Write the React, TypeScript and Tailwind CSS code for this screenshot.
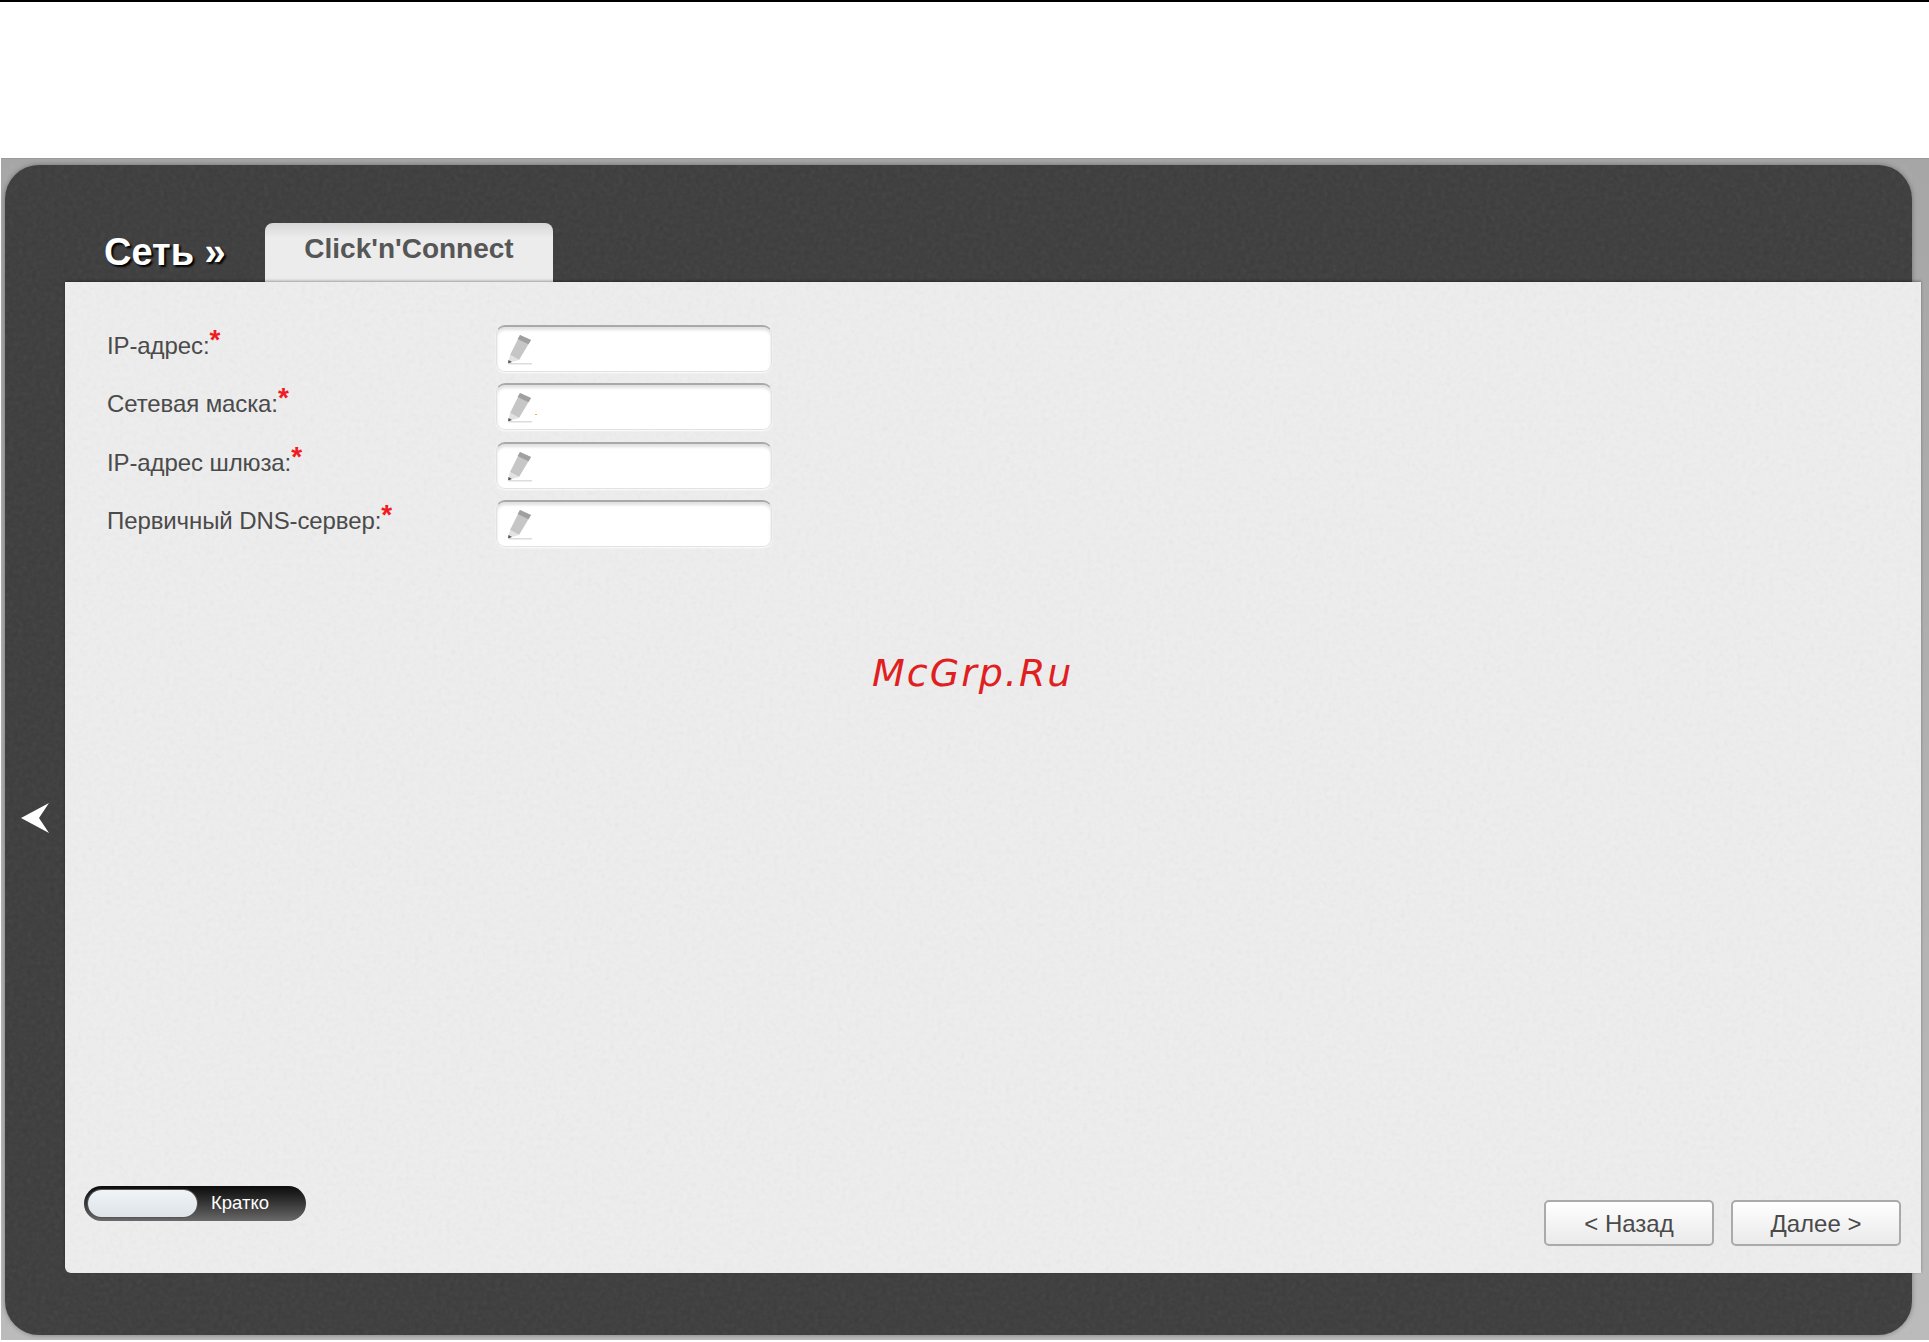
const fields = ['IP-адрес:', 'Сетевая маска:', 'IP-адрес шлюза:', 'Первичный DNS-сервер:'];

const Pencil = () => (
    <svg width="26" height="32" viewBox="0 0 26 32" className="shrink-0 ml-[10px] mt-[7px]">
        <path d="M13 1 L24 6 L12 26 L3 21 Z" fill="#c6c6c6" />
        <path d="M13 1 L24 6 L21.5 10.2 L10.6 5 Z" fill="#a0a0a0" />
        <path d="M3 21 L12 26 L1 29 Z" fill="#e2e2e2" />
        <path d="M1.5 26 L5 28 L1 29.5 Z" fill="#555555" />
        <rect x="2" y="29" width="23" height="1.5" fill="#dcdcdc" />
    </svg>
);

const Noise = ({ className }: { className: string }) => (
    <svg className={"absolute inset-0 w-full h-full pointer-events-none " + className}>
        <filter id="grain">
            <feTurbulence type="fractalNoise" baseFrequency="0.22" numOctaves="3" seed="4" />
            <feColorMatrix type="saturate" values="0" />
        </filter>
        <rect width="100%" height="100%" filter="url(#grain)" />
    </svg>
);

const Field = ({ label, speck }: { label: string; speck?: boolean }) => (
    <div className="flex items-start h-[47px]">
        <label className="w-[389px] pt-[4px] text-[24px] leading-[34px] tracking-[-0.1px] text-[#4a4a4a]">
            {label}
            <span className="relative -top-[5px] text-[28px] font-bold leading-none text-[#f01c24]">*</span>
        </label>
        <div className="flex items-start w-[276px] h-[47px] rounded-[9px] bg-white border border-[#e2e2e2] border-t-2 border-t-[#a9a9a9] shadow-[inset_0_3px_3px_rgba(0,0,0,0.12),0_1px_2px_rgba(255,255,255,0.9)]">
            <Pencil />
            {speck && <span className="mt-[29px] ml-[2px] w-[2px] h-[1px] bg-[#f0b060]" />}
            <input type="text" className="flex-1 min-w-0 h-full outline-none bg-transparent" />
        </div>
    </div>
);

const NavButton = ({ text }: { text: string }) => (
    <button className="w-[170px] h-[46px] pt-[2px] rounded-[5px] border-2 border-[#aaaaaa] bg-gradient-to-b from-white to-[#eaeaea] text-[24px] leading-none text-[#4a4a4a]">
        {text}
    </button>
);

const App = () => {
    return (
        <div className="h-[1342px] flex flex-col bg-white font-['Liberation_Sans',Arial,sans-serif] overflow-hidden">
            <div className="h-[2px] bg-black" />
            <div className="mt-[156px] ml-[1px] h-[1182px] pt-[6px] pl-[4px] pr-[17px] pb-[5px] border-t border-[#9a9a9a] bg-gradient-to-b from-[#a6a6a6] to-[#bbbbbb]">
                <div className="relative h-full flex flex-col rounded-[34px] bg-[#3c3c3c] shadow-[0_0_5px_rgba(0,0,0,0.35)]">
                    <Noise className="opacity-[0.08]" />
                    <svg width="30" height="32" viewBox="0 0 30 32" className="absolute left-[15px] top-[637px]">
                        <path d="M29 1 L19 16 L29 31 L1 16 Z" fill="#ffffff" />
                    </svg>

                    <div className="relative flex items-end h-[117px] pl-[99px]">
                        <div className="w-[161px] pb-[8px] text-[38px] leading-[44px] font-bold text-white [text-shadow:2px_2px_2px_#000]">
                            Сеть »
                        </div>
                        <div className="flex justify-center w-[288px] h-[59px] pt-[9px] rounded-t-[8px] bg-gradient-to-b from-[#d6d6d6] to-[#ececec] to-25% text-[28px] leading-[34px] font-bold text-[#565656]">
                            Click'n'Connect
                        </div>
                    </div>

                    <div className="relative flex-1 flex flex-col ml-[60px] -mr-[9px] mb-[62px] rounded-bl-[6px] bg-[#eeeeee] shadow-[0_-1px_3px_rgba(0,0,0,0.35)]">
                        <Noise className="opacity-[0.09]" />
                        <div className="relative flex flex-col gap-[11.3px] pt-[43px] pl-[42px]">
                            {fields.map((f, i) => (
                                <Field key={f} label={f} speck={i === 1} />
                            ))}
                        </div>

                        <div className="absolute left-[807px] top-[368px] font-['DejaVu_Sans',sans-serif] italic text-[38px] leading-[46px] tracking-[2px] text-[#e02020]">
                            McGrp.Ru
                        </div>

                        <div className="relative mt-auto flex justify-between h-[60px] mb-[27px] pl-[19px] pr-[20px]">
                            <div className="flex items-center w-[222px] h-[35px] rounded-full pl-[4px] bg-gradient-to-b from-[#0c0c0c] to-[#6a6a6a]">
                                <div className="w-[109px] h-[27px] rounded-full bg-gradient-to-b from-[#f0f4f7] to-[#dde3e8] shadow-[0_0_0_1px_#555]" />
                                <span className="ml-[14px] text-[18.5px] leading-none text-white">Кратко</span>
                            </div>
                            <div className="flex items-end gap-[17px]">
                                <NavButton text="< Назад" />
                                <NavButton text="Далее >" />
                            </div>
                        </div>
                    </div>
                </div>
            </div>
        </div>
    );
};

export default App;
